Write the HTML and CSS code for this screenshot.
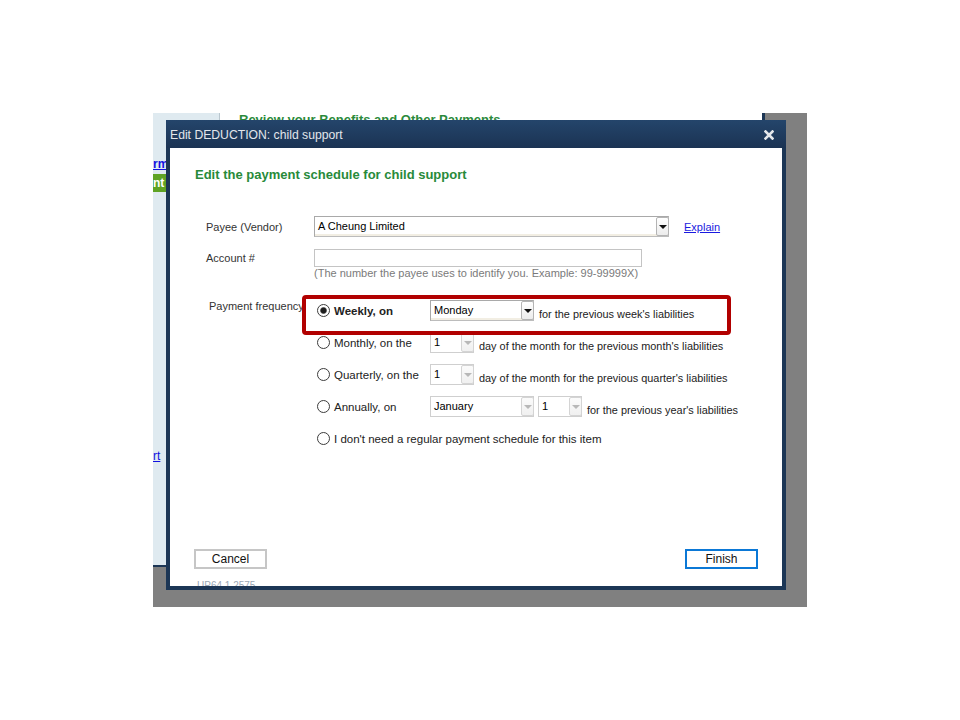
FILE: index.html
```html
<!DOCTYPE html>
<html>
<head>
<meta charset="utf-8">
<title>Edit DEDUCTION: child support</title>
<link rel="stylesheet" href="styles.css">
</head>
<body>
<div class="stage">
  <div class="app">
    <div class="side">
      <a class="side-link first">rm</a>
      <div class="side-green">nt</div>
      <a class="side-link last">rt</a>
    </div>
    <div class="main">
      <div class="main-title">Review your Benefits and Other Payments</div>
    </div>
  </div>

  <div class="dialog">
    <div class="titlebar">
      <span class="title">Edit DEDUCTION: child support</span>
      <svg class="close" width="10" height="10" viewBox="0 0 10 10"><path d="M1.5 1.5 L8.5 8.5 M8.5 1.5 L1.5 8.5" stroke="#e4e7eb" stroke-width="2.6" stroke-linecap="square"/></svg>
    </div>
    <div class="content">
      <div class="heading">Edit the payment schedule for child support</div>

      <div class="form">
        <div class="field-row">
          <span class="label">Payee (Vendor)</span>
          <div class="combo payee">
            <span class="combo-text">A Cheung Limited</span>
            <span class="combo-btn"><span class="tri"></span></span>
          </div>
          <a class="explain">Explain</a>
        </div>
        <div class="field-row account">
          <span class="label">Account #</span>
          <div class="input"></div>
        </div>
        <div class="hint">(The number the payee uses to identify you. Example: 99-99999X)</div>
      </div>

      <div class="freq">
        <span class="freq-label">Payment frequency</span>
        <div class="options">
          <div class="opt">
            <div class="opt-main"><span class="radio checked"></span><span class="opt-text strong">Weekly, on</span></div>
            <div class="combo long"><span class="combo-text">Monday</span><span class="combo-btn"><span class="tri"></span></span></div>
            <span class="trail">for the previous week's liabilities</span>
          </div>
          <div class="opt">
            <div class="opt-main"><span class="radio"></span><span class="opt-text">Monthly, on the</span></div>
            <div class="combo short off"><span class="combo-text">1</span><span class="combo-btn"><span class="tri"></span></span></div>
            <span class="trail">day of the month for the previous month's liabilities</span>
          </div>
          <div class="opt">
            <div class="opt-main"><span class="radio"></span><span class="opt-text">Quarterly, on the</span></div>
            <div class="combo short off"><span class="combo-text">1</span><span class="combo-btn"><span class="tri"></span></span></div>
            <span class="trail">day of the month for the previous quarter's liabilities</span>
          </div>
          <div class="opt">
            <div class="opt-main"><span class="radio"></span><span class="opt-text">Annually, on</span></div>
            <div class="combo long off"><span class="combo-text">January</span><span class="combo-btn"><span class="tri"></span></span></div>
            <div class="combo short off pair"><span class="combo-text">1</span><span class="combo-btn"><span class="tri"></span></span></div>
            <span class="trail">for the previous year's liabilities</span>
          </div>
          <div class="opt">
            <div class="opt-main wide"><span class="radio"></span><span class="opt-text">I don't need a regular payment schedule for this item</span></div>
          </div>
        </div>
      </div>

      <div class="highlight"></div>

      <div class="buttons">
        <button class="btn">Cancel</button>
        <button class="btn primary">Finish</button>
      </div>
      <div class="version">UP64.1.2575</div>
    </div>
  </div>
</div>
</body>
</html>
```

FILE: styles.css
```css
html, body {
  margin: 0;
  padding: 0;
  background: #ffffff;
}

body {
  font-family: "Liberation Sans", Arial, sans-serif;
}

.stage {
  position: relative;
  margin: 113px 0 0 153px;
  width: 654px;
  height: 494px;
  background: #808080;
}

/* background application window */
.app {
  display: flex;
  width: 612px;
  height: 454px;
  box-sizing: border-box;
  border-right: 3px solid #1c3655;
  border-bottom: 2px solid #1c3655;
  background: #ffffff;
  overflow: hidden;
}

.side {
  width: 67px;
  flex: none;
  background: #dfeaf0;
  border-right: 1px solid #b9c6ce;
  display: flex;
  flex-direction: column;
  padding-top: 44px;
  box-sizing: border-box;
}

.side-link {
  font-size: 12px;
  font-weight: bold;
  line-height: 14px;
  color: #1010e0;
  text-decoration: underline;
}

.side-link.last {
  margin-top: auto;
  margin-bottom: 102px;
  font-weight: normal;
}

.side-green {
  margin-top: 3px;
  height: 18px;
  background: #5fa324;
  color: #ffffff;
  font-size: 12px;
  font-weight: bold;
  line-height: 18px;
}

.main {
  flex: 1;
  padding-left: 19px;
}

.main-title {
  font-size: 13px;
  font-weight: bold;
  line-height: 14px;
  color: #2b8a3b;
}

/* dialog */
.dialog {
  position: absolute;
  left: 13px;
  top: 7px;
  width: 620px;
  height: 470px;
  box-sizing: border-box;
  padding: 0 4px 4px;
  background: #1c3655;
  display: flex;
  flex-direction: column;
}

.titlebar {
  height: 28px;
  flex: none;
  margin: 0 -4px;
  padding: 0 12px 0 4px;
  display: flex;
  align-items: center;
  justify-content: space-between;
  background: linear-gradient(#24456b, #1b3353);
}

.title {
  color: #e2e6eb;
  font-size: 12.2px;
  line-height: 16px;
  padding-top: 2px;
}

.close {
  display: block;
  margin-top: 2px;
}

.content {
  position: relative;
  flex: 1;
  background: #ffffff;
  padding: 19px 24px 0 24px;
  display: flex;
  flex-direction: column;
  overflow: hidden;
}

.heading {
  margin-left: 1px;
  font-size: 13px;
  font-weight: bold;
  line-height: 16px;
  color: #288a3a;
}

.form {
  margin: 33px 0 0 12px;
}

.field-row {
  display: flex;
  align-items: center;
}

.field-row.account {
  margin-top: 12px;
}

.label {
  width: 108px;
  flex: none;
  font-size: 11px;
  line-height: 13px;
  color: #333333;
  padding-top: 1px;
}

.combo {
  display: flex;
  align-items: stretch;
  height: 21px;
  box-sizing: border-box;
  border: 1px solid #bcbcbc;
  border-top-color: #a9a9a9;
  border-left-color: #a9a9a9;
  background: #ffffff;
  box-shadow: inset 0 -2px 0 #f2eee3;
}

.combo.payee { width: 355px; }
.combo.long { width: 104px; }
.combo.short { width: 44px; }
.combo.pair { margin-left: 4px; }

.combo-text {
  flex: 1;
  padding-left: 3px;
  font-size: 11px;
  line-height: 19px;
  color: #000000;
  white-space: nowrap;
}

.combo-btn {
  width: 13px;
  flex: none;
  margin: 0 -1px 0 0;
  box-sizing: border-box;
  border: 1px solid #b4b4b4;
  border-radius: 2px;
  background: linear-gradient(#ffffff, #ececec);
  display: flex;
  align-items: center;
  justify-content: center;
}

.tri {
  width: 0;
  height: 0;
  border-left: 4px solid transparent;
  border-right: 4px solid transparent;
  border-top: 4px solid #111111;
}

.combo.off {
  border-color: #cfcfcf;
  box-shadow: none;
}

.combo.off .combo-btn {
  border-color: #d4d4d4;
  background: linear-gradient(#fbfbfb, #f0f0f0);
}

.combo.off .tri {
  border-top-color: #b8b8b8;
}

.explain {
  margin-left: 15px;
  font-size: 11px;
  line-height: 13px;
  color: #1a1ae0;
  text-decoration: underline;
  padding-top: 1px;
}

.input {
  width: 328px;
  height: 18px;
  box-sizing: border-box;
  border: 1px solid #c4c4c4;
  background: #ffffff;
}

.hint {
  margin-left: 108px;
  font-size: 11px;
  line-height: 13px;
  color: #7a7a7a;
  white-space: nowrap;
}

.freq {
  margin: 20px 0 0 12px;
  display: flex;
}

.freq-label {
  width: 108px;
  flex: none;
  padding-left: 3px;
  box-sizing: border-box;
  font-size: 11px;
  line-height: 13px;
  color: #333333;
  white-space: nowrap;
}

.options {
  display: flex;
  flex-direction: column;
  gap: 11px;
  padding-left: 3px;
}

.opt {
  height: 21px;
  display: flex;
  align-items: center;
}

.opt-main {
  width: 113px;
  flex: none;
  display: flex;
  align-items: center;
}

.opt-main.wide {
  width: auto;
}

.radio {
  width: 13px;
  height: 13px;
  flex: none;
  box-sizing: border-box;
  border: 1px solid #3c3c3c;
  border-radius: 50%;
  background: #ffffff;
  margin-right: 4px;
}

.radio.checked {
  background: radial-gradient(circle, #1e1e1e 0 2.6px, #8a8a8a 3.2px, #ffffff 3.8px);
}

.opt-text {
  font-size: 11.5px;
  line-height: 14px;
  color: #222222;
  white-space: nowrap;
}

.opt-text.strong {
  font-weight: bold;
}

.trail {
  align-self: flex-end;
  margin-left: 5px;
  font-size: 10.9px;
  line-height: 13px;
  color: #222222;
  white-space: nowrap;
}

.highlight {
  position: absolute;
  left: 132px;
  top: 147px;
  width: 429px;
  height: 40px;
  box-sizing: border-box;
  border: 4px solid #b10000;
  border-radius: 4px;
}

.buttons {
  margin-top: auto;
  display: flex;
  justify-content: space-between;
}

.btn {
  width: 73px;
  height: 20px;
  box-sizing: border-box;
  border: 2px solid #c6c6c6;
  background: #ffffff;
  padding: 0;
  font-family: "Liberation Sans", Arial, sans-serif;
  font-size: 12px;
  color: #111111;
}

.btn.primary {
  border-color: #0b78d6;
}

.version {
  margin: 11px 0 0 3px;
  height: 6px;
  overflow: hidden;
  font-size: 10px;
  line-height: 11px;
  color: #9ba7b5;
}
```
